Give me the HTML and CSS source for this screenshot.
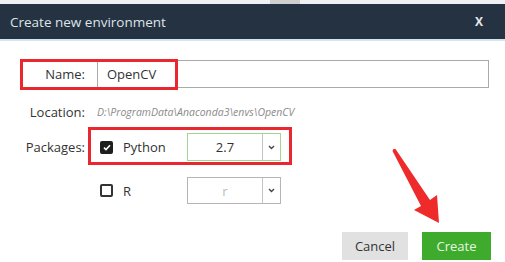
FILE: index.html
```html
<!DOCTYPE html>
<html>
<head>
    <title>Create new environment</title>
    <link rel="stylesheet" href="styles.css">
</head>
<body>
    <div class="page">
        <div class="strip"><div class="strip-block"></div></div>
        <div class="titlebar">
            <span class="title">Create new environment</span>
            <span class="close">X</span>
        </div>

        <div class="form">
            <div class="row row-name">
                <label class="label">Name:</label>
                <input class="text-input" type="text" value="OpenCV">
                <div class="mark mark-name"></div>
            </div>

            <div class="row row-location">
                <span class="label">Location:</span>
                <span class="path">D:\ProgramData\Anaconda3\envs\OpenCV</span>
            </div>

            <div class="row row-pkg">
                <span class="label">Packages:</span>
                <span class="check checked">
                    <svg width="8" height="7" viewBox="0 0 8 7"><path d="M1 3.6 L3 5.6 L7 1.2" fill="none" stroke="#fff" stroke-width="1.6"/></svg>
                </span>
                <span class="pkg-name">Python</span>
                <div class="select select-on">
                    <span class="select-value">2.7</span>
                    <span class="select-arrow">
                        <svg width="7" height="5" viewBox="0 0 7 5"><path d="M1 1 L3.5 3.5 L6 1" fill="none" stroke="#444" stroke-width="1.4"/></svg>
                    </span>
                </div>
                <div class="mark mark-pkg"></div>
            </div>

            <div class="row row-r">
                <span class="label"></span>
                <span class="check"></span>
                <span class="pkg-name">R</span>
                <div class="select select-off">
                    <span class="select-value">r</span>
                    <span class="select-arrow">
                        <svg width="7" height="5" viewBox="0 0 7 5"><path d="M1 1 L3.5 3.5 L6 1" fill="none" stroke="#444" stroke-width="1.4"/></svg>
                    </span>
                </div>
            </div>

            <div class="buttons">
                <button class="btn btn-cancel">Cancel</button>
                <button class="btn btn-create">Create</button>
            </div>
        </div>

        <!-- red annotation arrow -->
        <svg class="arrow" width="80" height="90" viewBox="0 0 80 90">
            <path d="M1.5 0 L3.5 0 L38 51 L45 46 L47 74 L22 61 L29 57 L0.5 2 Z" fill="#ee2a2a"/>
        </svg>
    </div>
</body>
</html>
```

FILE: styles.css
```css
body {
    margin: 0;
    background-color: white;
    font-family: "Open Sans", "DejaVu Sans", sans-serif;
    color: #333;
}
.page {
    position: relative;
    width: 505px;
    height: 262px;
    overflow: hidden;
}
.strip {
    height: 4px;
    background-color: #edf1f3;
}
.strip-block {
    margin-left: 270px;
    width: 30px;
    height: 4px;
    background-color: #cfcfcf;
}
.titlebar {
    height: 35px;
    background-color: #243241;
    border-bottom: 2px solid #d3e5ee;
    display: flex;
    align-items: center;
    justify-content: space-between;
    padding: 0 22px 0 10px;
}
.title {
    color: #dfe4e8;
    font-size: 13.5px;
}
.close {
    color: #e6e9ec;
    font-size: 12px;
    font-weight: bold;
}
.form {
    display: flex;
    flex-direction: column;
    padding-top: 19px;
}
.row {
    position: relative;
    display: flex;
    align-items: center;
    font-size: 13px;
}
.label {
    width: 85px;
    margin-right: 12px;
    text-align: right;
    flex-shrink: 0;
}
.row-name {
    height: 28px;
}
.text-input {
    width: 392px;
    height: 28px;
    box-sizing: border-box;
    border: 1px solid #aaa;
    padding: 0 9px;
    font-family: inherit;
    font-size: 13px;
    color: #333;
    outline: none;
}
.row-location {
    height: 16px;
    margin-top: 16px;
}
.path {
    font-size: 10.5px;
    font-style: italic;
    color: #8a8a8a;
}
.row-pkg {
    height: 28px;
    margin-top: 13px;
}
.row-r {
    height: 27px;
    margin-top: 16px;
}
.check {
    width: 13px;
    height: 13px;
    box-sizing: border-box;
    border: 2px solid #333;
    border-radius: 2px;
    margin-left: 3px;
    display: flex;
    align-items: center;
    justify-content: center;
}
.check.checked {
    background-color: #1e1e1e;
    border-color: #1e1e1e;
}
.pkg-name {
    margin-left: 10px;
    width: 64px;
}
.select {
    width: 94px;
    height: 100%;
    box-sizing: border-box;
    display: flex;
    background-color: white;
}
.select-on {
    border: 1px solid #a3d592;
}
.select-off {
    border: 1px solid #b5b5b5;
}
.select-value {
    flex: 1;
    display: flex;
    align-items: center;
    justify-content: center;
}
.select-off .select-value {
    color: #bbb;
}
.select-arrow {
    width: 17px;
    display: flex;
    align-items: center;
    justify-content: center;
    border-left: 1px solid #c4c4c4;
}
.mark {
    position: absolute;
    box-sizing: border-box;
    border: 3px solid #e8272e;
}
.mark-name {
    left: 20px;
    top: -1px;
    width: 158px;
    height: 31px;
}
.mark-pkg {
    left: 88px;
    top: -6px;
    width: 204px;
    height: 38px;
}
.buttons {
    display: flex;
    justify-content: flex-end;
    gap: 14px;
    padding-right: 14px;
    margin-top: 28px;
}
.btn {
    height: 28px;
    border: none;
    font-family: inherit;
    font-size: 13px;
    padding: 0;
}
.btn-cancel {
    width: 66px;
    background-color: #e1e1e1;
    color: #333;
}
.btn-create {
    width: 69px;
    background-color: #3fab2c;
    color: #e9f6e4;
}
.arrow {
    position: absolute;
    left: 392px;
    top: 149px;
}
```
